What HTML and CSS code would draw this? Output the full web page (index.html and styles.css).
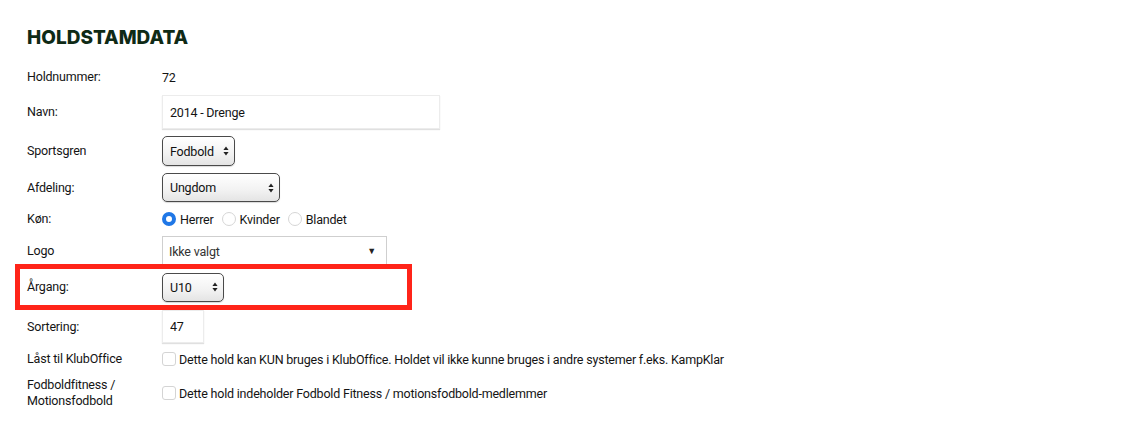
FILE: index.html
```html
<!DOCTYPE html>
<html lang="da">
<head>
  <meta charset="UTF-8" />
  <title>Holdstamdata</title>
  <link rel="stylesheet" href="styles.css">
</head>
<body>

  <!-- Holdstamdata form -->
  <div class="team-form">
    <h2>HOLDSTAMDATA</h2>

    <div class="row row-plain">
      <div class="label">Holdnummer:</div>
      <div class="value">72</div>
    </div>

    <div class="row">
      <label class="label" for="navn">Navn:</label>
      <input type="text" id="navn" class="text-input wide" value="2014 - Drenge">
    </div>

    <div class="row">
      <label class="label" for="sport">Sportsgren</label>
      <span class="mac-select sport">
        <select id="sport"><option>Fodbold</option></select>
        <svg class="arrows" width="6" height="10" viewBox="0 0 6 10"><path d="M3 0.5 L5.6 4 H0.4 Z M3 9.5 L5.6 6 H0.4 Z" fill="#222"/></svg>
      </span>
    </div>

    <div class="row">
      <label class="label" for="afdeling">Afdeling:</label>
      <span class="mac-select afdeling">
        <select id="afdeling"><option>Ungdom</option></select>
        <svg class="arrows" width="6" height="10" viewBox="0 0 6 10"><path d="M3 0.5 L5.6 4 H0.4 Z M3 9.5 L5.6 6 H0.4 Z" fill="#222"/></svg>
      </span>
    </div>

    <div class="row row-radio">
      <div class="label">Køn:</div>
      <div class="radios">
        <label class="radio"><span class="dot checked"></span>Herrer</label>
        <label class="radio"><span class="dot"></span>Kvinder</label>
        <label class="radio"><span class="dot"></span>Blandet</label>
      </div>
    </div>

    <div class="row">
      <label class="label">Logo</label>
      <div class="logo-select">
        <span>Ikke valgt</span>
        <span class="caret">▼</span>
      </div>
    </div>

    <div class="row highlight">
      <label class="label" for="aargang">Årgang:</label>
      <span class="mac-select aargang">
        <select id="aargang"><option>U10</option></select>
        <svg class="arrows" width="6" height="10" viewBox="0 0 6 10"><path d="M3 0.5 L5.6 4 H0.4 Z M3 9.5 L5.6 6 H0.4 Z" fill="#222"/></svg>
      </span>
    </div>

    <div class="row sort-row">
      <label class="label" for="sort">Sortering:</label>
      <input type="text" id="sort" class="text-input short" value="47">
    </div>

    <div class="row row-check">
      <div class="label">Låst til KlubOffice</div>
      <label class="check"><span class="box"></span>Dette hold kan KUN bruges i KlubOffice. Holdet vil ikke kunne bruges i andre systemer f.eks. KampKlar</label>
    </div>

    <div class="row row-check two-line">
      <div class="label">Fodboldfitness /<br>Motionsfodbold</div>
      <label class="check"><span class="box"></span>Dette hold indeholder Fodbold Fitness / motionsfodbold-medlemmer</label>
    </div>
  </div>

</body>
</html>
```

FILE: styles.css
```css
* { margin: 0; padding: 0; box-sizing: border-box; }
body {
  background: #fff;
  color: #141414;
  font-family: Roboto, 'Liberation Sans', sans-serif;
  font-size: 12.5px;
  letter-spacing: -0.2px;
}

.team-form {
  padding: 25px 0 0 27px;
  display: flex;
  flex-direction: column;
  gap: 7px;
}

.team-form h2 {
  font-family: Inter, 'Liberation Sans', sans-serif;
  font-weight: 800;
  font-size: 19px;
  line-height: 26px;
  letter-spacing: 0;
  color: #0f2a16;
  margin-bottom: 8px;
}

.row {
  display: grid;
  grid-template-columns: 135px auto;
  align-items: center;
  justify-content: start;
}
.label { line-height: 16px; }
.row-plain { height: 22px; }
.row-radio { height: 20px; }
.row-check { height: 22px; margin-top: -2px; }
.two-line { height: 32px; margin-top: 0; }

/* text inputs */
.text-input {
  font: inherit;
  letter-spacing: inherit;
  color: #141414;
  height: 34px;
  padding: 0 7px;
  border: 1px solid #ececec;
  box-shadow: 0 1px 1px rgba(0,0,0,0.12);
  outline: none;
  background: #fff;
}
.wide { width: 278px; }
.short { width: 42px; height: 33px; }
.sort-row { margin-top: -2px; }

/* native looking mac selects */
.mac-select { position: relative; display: inline-block; }
.mac-select select {
  -webkit-appearance: none;
  appearance: none;
  font: inherit;
  letter-spacing: inherit;
  color: #111;
  height: 30px;
  padding: 0 7px;
  border: 1px solid #4a4a4a;
  border-radius: 5px;
  background: linear-gradient(#ffffff, #f2f2f2 60%, #e4e4e4);
  box-shadow: 0 1px 1px rgba(0,0,0,0.15);
  outline: none;
}
.mac-select .arrows {
  position: absolute;
  right: 6px;
  top: 50%;
  margin-top: -5px;
  pointer-events: none;
}
.sport select { width: 73px; }
.afdeling select { width: 118px; height: 29px; }
.aargang select { width: 62px; height: 29px; }

/* logo dropdown */
.logo-select {
  width: 225px;
  height: 30px;
  border: 1px solid #cfcfcf;
  display: flex;
  align-items: center;
  justify-content: space-between;
  padding: 0 10px 0 6px;
  color: #333;
}
.logo-select .caret { font-size: 9px; color: #222; }

/* red highlight around Årgang */
.highlight {
  height: 36px;
  width: 387px;
  margin: -4px 0 0 -7px;
  padding-left: 7px;
  outline: 5px solid #ff2419;
}

/* radios */
.radios { display: flex; align-items: center; gap: 8px; }
.radio { display: flex; align-items: center; gap: 4px; }
.dot {
  width: 14px;
  height: 14px;
  border-radius: 50%;
  border: 1px solid #d6d6d6;
  background: #fff;
}
.dot.checked {
  border: 4px solid #1f77e6;
  background: #fff;
}

/* checkboxes */
.check { display: flex; align-items: center; gap: 3px; }
.check .box {
  width: 14px;
  height: 14px;
  border: 1px solid #d4d4d4;
  border-radius: 3px;
  background: #fff;
}
```
